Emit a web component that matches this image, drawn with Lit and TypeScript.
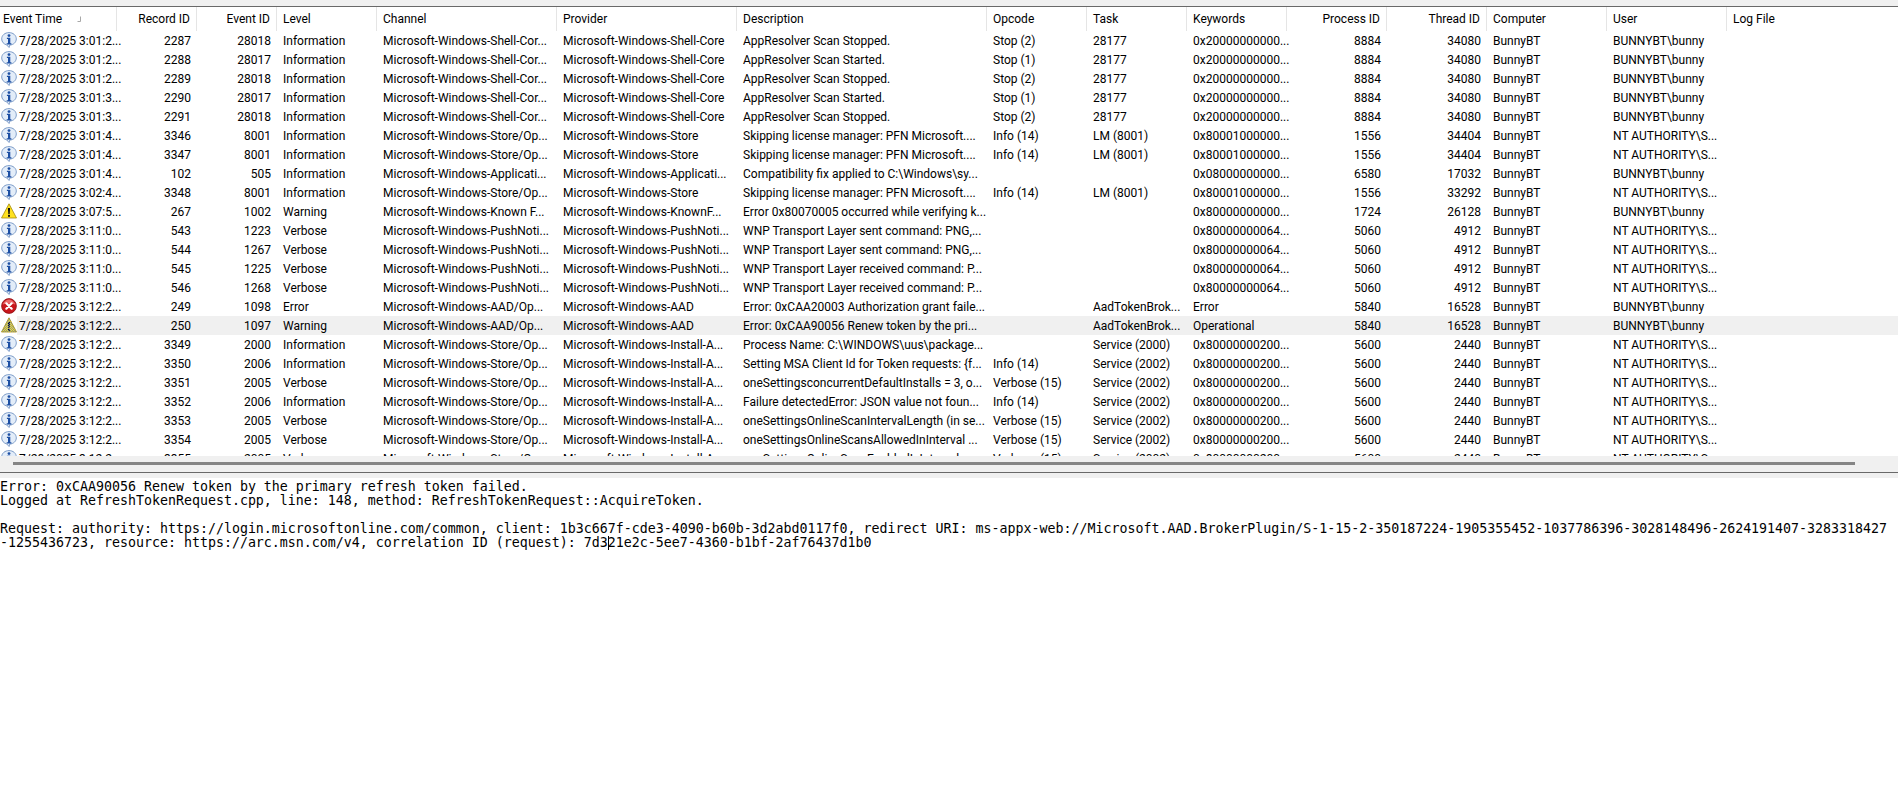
import { LitElement, html, css, svg } from "lit";
import { customElement } from "lit/decorators.js";

type Kind = "i" | "w" | "e";
interface Row { k: Kind; c: string[]; sel?: boolean; }

const SH = "Microsoft-Windows-Shell-Cor...";
const ST = "Microsoft-Windows-Store/Op...";
const PU = "Microsoft-Windows-PushNoti...";
const AD = "Microsoft-Windows-AAD/Op...";
const PSH = "Microsoft-Windows-Shell-Core";
const PST = "Microsoft-Windows-Store";
const PPU = "Microsoft-Windows-PushNoti...";
const PAD = "Microsoft-Windows-AAD";
const PIN = "Microsoft-Windows-Install-A...";
const NT = "NT AUTHORITY\\S...";
const BU = "BUNNYBT\\bunny";
const I = "Information";
const V = "Verbose";
const K2 = "0x20000000000...";
const K8 = "0x80001000000...";
const K6 = "0x80000000064...";
const KI = "0x80000000200...";
const LIC = "Skipping license manager: PFN Microsoft....";

const t = (s: string) => `7/28/2025 ${s}...`;
const r = (k: Kind, c: string[], sel = false): Row => ({ k, c: [...c.slice(0, 12), "BunnyBT", c[12]], sel });

const ROWS: Row[] = [
  r("i", [t("3:01:2"), "2287", "28018", I, SH, PSH, "AppResolver Scan Stopped.", "Stop (2)", "28177", K2, "8884", "34080", BU]),
  r("i", [t("3:01:2"), "2288", "28017", I, SH, PSH, "AppResolver Scan Started.", "Stop (1)", "28177", K2, "8884", "34080", BU]),
  r("i", [t("3:01:2"), "2289", "28018", I, SH, PSH, "AppResolver Scan Stopped.", "Stop (2)", "28177", K2, "8884", "34080", BU]),
  r("i", [t("3:01:3"), "2290", "28017", I, SH, PSH, "AppResolver Scan Started.", "Stop (1)", "28177", K2, "8884", "34080", BU]),
  r("i", [t("3:01:3"), "2291", "28018", I, SH, PSH, "AppResolver Scan Stopped.", "Stop (2)", "28177", K2, "8884", "34080", BU]),
  r("i", [t("3:01:4"), "3346", "8001", I, ST, PST, LIC, "Info (14)", "LM (8001)", K8, "1556", "34404", NT]),
  r("i", [t("3:01:4"), "3347", "8001", I, ST, PST, LIC, "Info (14)", "LM (8001)", K8, "1556", "34404", NT]),
  r("i", [t("3:01:4"), "102", "505", I, "Microsoft-Windows-Applicati...", "Microsoft-Windows-Applicati...", "Compatibility fix applied to C:\\Windows\\sy...", "", "", "0x08000000000...", "6580", "17032", BU]),
  r("i", [t("3:02:4"), "3348", "8001", I, ST, PST, LIC, "Info (14)", "LM (8001)", K8, "1556", "33292", NT]),
  r("w", [t("3:07:5"), "267", "1002", "Warning", "Microsoft-Windows-Known F...", "Microsoft-Windows-KnownF...", "Error 0x80070005 occurred while verifying k...", "", "", "0x80000000000...", "1724", "26128", BU]),
  r("i", [t("3:11:0"), "543", "1223", V, PU, PPU, "WNP Transport Layer sent command: PNG,...", "", "", K6, "5060", "4912", NT]),
  r("i", [t("3:11:0"), "544", "1267", V, PU, PPU, "WNP Transport Layer sent command: PNG,...", "", "", K6, "5060", "4912", NT]),
  r("i", [t("3:11:0"), "545", "1225", V, PU, PPU, "WNP Transport Layer received command: P...", "", "", K6, "5060", "4912", NT]),
  r("i", [t("3:11:0"), "546", "1268", V, PU, PPU, "WNP Transport Layer received command: P...", "", "", K6, "5060", "4912", NT]),
  r("e", [t("3:12:2"), "249", "1098", "Error", AD, PAD, "Error: 0xCAA20003 Authorization grant faile...", "", "AadTokenBrok...", "Error", "5840", "16528", BU]),
  r("w", [t("3:12:2"), "250", "1097", "Warning", AD, PAD, "Error: 0xCAA90056 Renew token by the pri...", "", "AadTokenBrok...", "Operational", "5840", "16528", BU], true),
  r("i", [t("3:12:2"), "3349", "2000", I, ST, PIN, "Process Name: C:\\WINDOWS\\uus\\package...", "", "Service (2000)", KI, "5600", "2440", NT]),
  r("i", [t("3:12:2"), "3350", "2006", I, ST, PIN, "Setting MSA Client Id for Token requests: {f...", "Info (14)", "Service (2002)", KI, "5600", "2440", NT]),
  r("i", [t("3:12:2"), "3351", "2005", V, ST, PIN, "oneSettingsconcurrentDefaultInstalls = 3, o...", "Verbose (15)", "Service (2002)", KI, "5600", "2440", NT]),
  r("i", [t("3:12:2"), "3352", "2006", I, ST, PIN, "Failure detectedError: JSON value not foun...", "Info (14)", "Service (2002)", KI, "5600", "2440", NT]),
  r("i", [t("3:12:2"), "3353", "2005", V, ST, PIN, "oneSettingsOnlineScanIntervalLength (in se...", "Verbose (15)", "Service (2002)", KI, "5600", "2440", NT]),
  r("i", [t("3:12:2"), "3354", "2005", V, ST, PIN, "oneSettingsOnlineScansAllowedInInterval ...", "Verbose (15)", "Service (2002)", KI, "5600", "2440", NT]),
  r("i", [t("3:12:2"), "3355", "2005", V, ST, PIN, "oneSettingsOnlineScanEnabledInInterval ...", "Verbose (15)", "Service (2002)", KI, "5600", "2440", NT]),
];

const HEADERS = ["Event Time", "Record ID", "Event ID", "Level", "Channel", "Provider", "Description", "Opcode", "Task", "Keywords", "Process ID", "Thread ID", "Computer", "User", "Log File"];
const RIGHT = new Set([1, 2, 10, 11]);

const icon = (k: Kind, sel: boolean) => {
  if (k === "i")
    return svg`<svg class="ic" viewBox="0 0 16 16" width="16" height="16">
      <path d="M8 .6C4 .6.7 3.2.7 6.9c0 3 2.1 5.3 5 6l2.4 2.6.6-2.4c3.7-.2 6.6-2.8 6.6-6.2C15.3 3.2 12 .6 8 .6z" fill="#e3edf9" stroke="#7d9cc8"/>
      <circle cx="8" cy="3.6" r="1.4" fill="#1d4fa3"/>
      <path d="M5.9 5.8h3.4v5.4h1.1v1.3H5.7v-1.3h1.3V7.1H5.9z" fill="#1d4fa3"/></svg>`;
  if (k === "e")
    return svg`<svg class="ic" viewBox="0 0 16 16" width="16" height="16">
      <circle cx="8" cy="8" r="7.4" fill="#c8171c" stroke="#8e1014" stroke-width=".8"/>
      <path d="M1.6 6.5C3 3 6 1.5 8 1.5s5 1.5 6.4 5C12 5 4 5 1.6 6.5z" fill="#ea6a6a"/>
      <path d="M5.3 5.3l5.4 5.4M10.7 5.3l-5.4 5.4" stroke="#fff" stroke-width="2.2" stroke-linecap="round"/></svg>`;
  return svg`<svg class="ic" viewBox="0 0 16 16" width="16" height="16">
    <defs><pattern id="dith" width="2" height="2" patternUnits="userSpaceOnUse"><rect width="1" height="1" fill="#5b78c0" fill-opacity=".75"/><rect x="1" y="1" width="1" height="1" fill="#5b78c0" fill-opacity=".75"/></pattern></defs>
    <path d="M8 .8L15.5 15H.5z" fill="#ffe21f" stroke="#a58a10" stroke-width=".8" stroke-linejoin="round"/>
    <path d="M6.9 5h2.2l-.4 6H7.3z" fill="#111"/><rect x="7" y="11.8" width="2" height="2" fill="#111"/>
    ${sel ? svg`<path d="M8 .8L15.5 15H.5z" fill="url(#dith)"/>` : ""}</svg>`;
};

@customElement("app-root")
export class AppRoot extends LitElement {
  static styles = css`
    :host { display: flex; flex-direction: column; width: 1898px; height: 795px; overflow: hidden; background: #fff; color: #000; font-family: Roboto, "Liberation Sans", sans-serif; font-size: 12px; }
    .topbar { height: 6px; background: #f0f0f0; border-bottom: 1px solid #696969; flex: none; }
    .cols { display: grid; grid-template-columns: 117px 80px 80px 100px 180px 180px 250px 100px 100px 100px 100px 100px 120px 120px 1fr; }
    .head { height: 24px; flex: none; color: #000; }
    .hc { display: flex; align-items: center; padding: 0 6px; border-right: 1px solid #e5e5e5; white-space: nowrap; }
    .hc.first { padding-left: 3px; gap: 14px; }
    .hc:last-child { border-right: 0; }
    .hc.r { justify-content: flex-end; }
    .sort { flex: none; }
    .rows { height: 425px; overflow: hidden; flex: none; }
    .row { height: 19px; line-height: 21px; }
    .row.sel { background: linear-gradient(#f0f0f0, #f0f0f0) 17px 0 no-repeat; }
    .c { padding: 0 0 0 6px; white-space: nowrap; min-width: 0; height: 19px; }
    .c.r { text-align: right; padding: 0 6px 0 0; }
    .c.first { display: flex; align-items: flex-start; padding: 0 0 0 1px; gap: 2px; }
    .ic { flex: none; display: block; margin-top: 1px; }
    .hscroll { height: 16px; flex: none; background: #f0f0f0; display: flex; align-items: center; padding: 0 0 0 13px; border-bottom: 1px solid #696969; box-sizing: content-box; }
    .thumb { width: 1842px; height: 3px; background: #858585; margin-top: -2px; }
    .split { height: 5px; background: #f0f0f0; flex: none; }
    .detail { margin: 2px 0 0; font-family: "DejaVu Sans Mono", monospace; font-size: 13.29px; line-height: 14px; white-space: pre; color: #000; }
    .caret { display: inline-block; width: 1px; height: 14px; background: #000; margin-right: -1px; vertical-align: top; }
  `;

  render() {
    return html`
      <div class="topbar"></div>
      <div class="cols head">
        ${HEADERS.map((h, i) => html`<div class="hc ${RIGHT.has(i) ? "r" : ""} ${i === 0 ? "first" : ""}">${h}${i === 0
          ? html`<svg class="sort" width="6" height="7" viewBox="0 0 6 7"><path d="M4.5 .5v5H1.5" fill="none" stroke="#a8a8a8"/></svg>` : ""}</div>`)}
      </div>
      <div class="rows">
        ${ROWS.map((row) => html`<div class="cols row ${row.sel ? "sel" : ""}">
          ${row.c.map((v, i) => i === 0
            ? html`<div class="c first">${icon(row.k, !!row.sel)}<span>${v}</span></div>`
            : html`<div class="c ${RIGHT.has(i) ? "r" : ""}">${v}</div>`)}
        </div>`)}
      </div>
      <div class="hscroll"><div class="thumb"></div></div>
      <div class="split"></div>
      <pre class="detail">Error: 0xCAA90056 Renew token by the primary refresh token failed.
Logged at RefreshTokenRequest.cpp, line: 148, method: RefreshTokenRequest::AcquireToken.

Request: authority: https://login.microsoftonline.com/common, client: 1b3c667f-cde3-4090-b60b-3d2abd0117f0, redirect URI: ms-appx-web://Microsoft.AAD.BrokerPlugin/S-1-15-2-350187224-1905355452-1037786396-3028148496-2624191407-3283318427
-1255436723, resource: https://arc.msn.com/v4, correlation ID (request): 7d3<span class="caret"></span>21e2c-5ee7-4360-b1bf-2af76437d1b0</pre>
    `;
  }
}
